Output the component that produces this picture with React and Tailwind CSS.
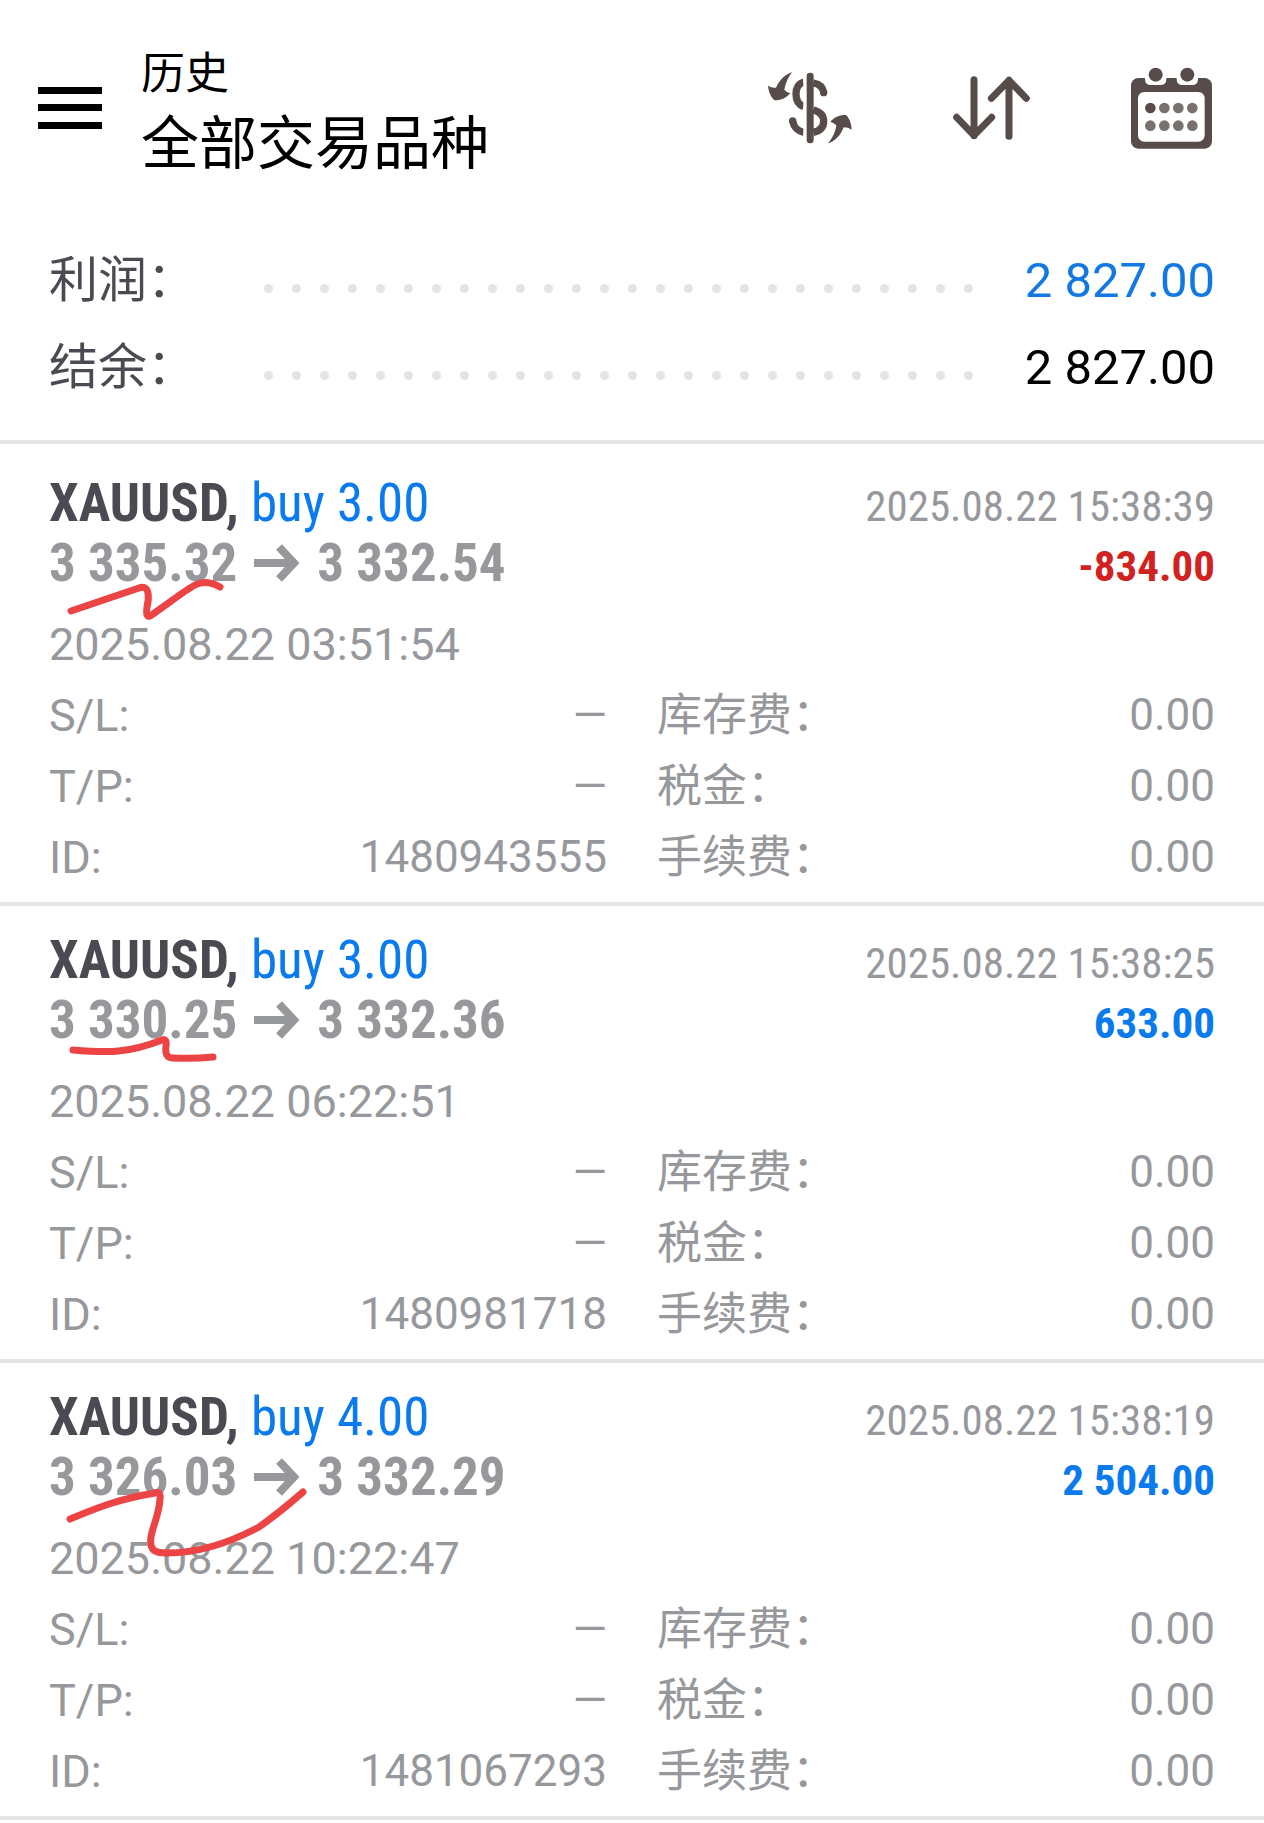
const SUMMARY = [
  { label: '利润：', value: '2 827.00', color: 'text-[#1279e4]' },
  { label: '结余：', value: '2 827.00', color: 'text-black' },
];

const DEALS = [
  {
    id: '1480943555',
    symbol: 'XAUUSD',
    side: 'buy 3.00',
    open: '3 335.32',
    close: '3 332.54',
    openTime: '2025.08.22 03:51:54',
    closeTime: '2025.08.22 15:38:39',
    profit: '-834.00',
    mark: 'M22 50 L90 27 Q97 24 99 32 Q100 38 98 46 Q96 60 104 53 C120 42 135 30 146 24 Q157 18 171 26',
  },
  {
    id: '1480981718',
    symbol: 'XAUUSD',
    side: 'buy 3.00',
    open: '3 330.25',
    close: '3 332.36',
    openTime: '2025.08.22 06:22:51',
    closeTime: '2025.08.22 15:38:25',
    profit: '633.00',
    mark: 'M24 32 C60 35 80 35 113 22 Q118 20 117 28 C116 36 118 40 124 40 Q145 41 164 39',
  },
  {
    id: '1481067293',
    symbol: 'XAUUSD',
    side: 'buy 4.00',
    open: '3 326.03',
    close: '3 332.29',
    openTime: '2025.08.22 10:22:47',
    closeTime: '2025.08.22 15:38:19',
    profit: '2 504.00',
    mark: 'M21 44 C50 32 70 24 106 18 Q112 16 111 24 C110 40 104 50 102 62 C100 76 106 78 118 78 C150 78 180 68 210 52 Q230 38 254 17',
  },
];

const DOTS = Array.from({ length: 26 }, (_, i) => i);

function MenuIcon() {
  return (
    <svg width="64" height="42" viewBox="0 0 64 42" fill="#000" aria-hidden="true">
      <rect x="0" y="0" width="64" height="7" />
      <rect x="0" y="17" width="64" height="7" />
      <rect x="0" y="35" width="64" height="7" />
    </svg>
  );
}

function CurrencyIcon() {
  return (
    <svg width="84" height="72" viewBox="0 0 252 216" fill="none" aria-hidden="true">
      <path
        d="M107 31 C92 34 84 48 84 66 C84 84 92 98 107 104 M136 33 C154 36 165 46 167 62 M136 114 C156 119 167 130 167 148 C167 166 156 177 136 181 M107 181 C90 178 77 165 74 147"
        stroke="#574c49"
        strokeWidth="22"
      />
      <circle cx="167" cy="62" r="11" fill="#574c49" />
      <circle cx="74" cy="147" r="11" fill="#574c49" />
      <rect x="106" y="0" width="10" height="216" fill="#fff" />
      <rect x="116" y="2" width="21" height="212" rx="10" fill="#574c49" />
      <path d="M72 1 C54 5 34 24 24 47 Q10 48 0 41 C2 60 9 76 20 85 C38 86 54 78 67 64 Q56 62 49 53 C52 34 60 16 72 1Z" fill="#574c49" />
      <path d="M180 214 C200 209 218 190 227 166 Q241 166 251 173 C250 154 244 138 234 129 C216 128 198 136 187 149 Q198 152 205 160 C202 182 192 200 180 214Z" fill="#574c49" />
    </svg>
  );
}

function SortIcon() {
  return (
    <svg width="77" height="64" viewBox="0 0 231 192" fill="none" stroke="#574c49" strokeWidth="21" strokeLinecap="round" strokeLinejoin="round" aria-hidden="true">
      <path d="M63 11 V179 M11 124 L63 178 L116 124" />
      <path d="M168 181 V13 M115 67 L168 13 L220 67" />
    </svg>
  );
}

function CalendarIcon() {
  return (
    <svg width="81" height="82" viewBox="0 0 243 246" aria-hidden="true">
      <rect x="0" y="33" width="243" height="212" rx="22" fill="#574c49" />
      <path d="M42 30 H106 V36 Q106 54 88 54 H60 Q42 54 42 36Z M137 30 H201 V36 Q201 54 183 54 H155 Q137 54 137 36Z" fill="#fff" />
      <circle cx="74" cy="23" r="21" fill="#574c49" />
      <circle cx="169" cy="23" r="21" fill="#574c49" />
      <rect x="21" y="75" width="200" height="149" rx="19" fill="#fff" />
      <g fill="#79716d">
        <circle cx="58" cy="123" r="16" fill="#574c49" />
        <circle cx="100" cy="123" r="16" />
        <circle cx="142" cy="123" r="16" />
        <circle cx="184" cy="123" r="16" />
        <circle cx="58" cy="176" r="16" />
        <circle cx="100" cy="176" r="16" />
        <circle cx="142" cy="176" r="16" />
        <circle cx="184" cy="176" r="16" />
      </g>
    </svg>
  );
}

function ArrowIcon() {
  return (
    <svg width="46" height="38" viewBox="0 0 46 38" fill="none" stroke="#97989c" strokeWidth="8" aria-label="to">
      <path d="M0 19 H40 M25 3 L40 19 L25 35" />
    </svg>
  );
}

function Field({ label, value }) {
  return (
    <div className="flex justify-between">
      <dt className="text-[45px]">{label}</dt>
      <dd className="text-[44px]">{value}</dd>
    </div>
  );
}

function Deal({ deal }) {
  const loss = deal.profit.startsWith('-');
  return (
    <article className="border-b-4 border-[#e4e4e4] px-[49px] pt-6 pb-[9px] text-[#97989c]">
      <div className="flex h-[60px] items-baseline justify-between font-['Roboto_Condensed',Roboto,sans-serif] leading-[60px]">
        <h2 className="text-[53px] text-[#0a7aef]">
          <span className="font-bold text-[#4b4a52]">{deal.symbol},</span> {deal.side}
        </h2>
        <time className="text-[43px]">{deal.closeTime}</time>
      </div>
      <div className="relative flex h-[60px] items-baseline justify-between font-['Roboto_Condensed',Roboto,sans-serif] font-bold leading-[60px]">
        <p className="flex items-center gap-[17px] text-[53px]">
          {deal.open}
          <ArrowIcon />
          {deal.close}
        </p>
        <p className={loss ? 'text-[43px] text-[#d12222]' : 'text-[43px] text-[#0a7aef]'}>{deal.profit}</p>
        {/* hand-drawn marker stroke */}
        <svg className="absolute top-7 left-0" width="270" height="90" viewBox="0 0 270 90" fill="none" stroke="#ec4444" strokeWidth="7" strokeLinecap="round" strokeLinejoin="round" aria-hidden="true">
          <path d={deal.mark} />
        </svg>
      </div>
      <div className="pt-4 leading-[71px]">
        <time className="block text-[45px]">{deal.openTime}</time>
        <dl className="grid grid-cols-2 gap-x-[50px]">
          <Field label="S/L:" value="—" />
          <Field label="库存费：" value="0.00" />
          <Field label="T/P:" value="—" />
          <Field label="税金：" value="0.00" />
          <Field label="ID:" value={deal.id} />
          <Field label="手续费：" value="0.00" />
        </dl>
      </div>
    </article>
  );
}

export default function App() {
  return (
    <main className="bg-white font-[Roboto,'Noto_Sans_CJK_SC',sans-serif]">
      <header className="flex items-center pt-8 pr-[52px] pl-[38px]">
        <button type="button" aria-label="菜单">
          <MenuIcon />
        </button>
        <div className="ml-[39px] flex-1 pt-3 text-black">
          <p className="text-[44px] leading-[60px]">历史</p>
          <h1 className="text-[58px] leading-[80px]">全部交易品种</h1>
        </div>
        <div className="flex items-center gap-[101px]">
          <button type="button" aria-label="货币">
            <CurrencyIcon />
          </button>
          <button type="button" aria-label="排序">
            <SortIcon />
          </button>
          <button type="button" aria-label="日历">
            <CalendarIcon />
          </button>
        </div>
      </header>

      <section className="border-b-4 border-[#e4e4e4] px-[49px] pt-[53px] pb-[29px] text-[49px] leading-[87px]">
        {SUMMARY.map((row) => (
          <div key={row.label} className="flex items-center">
            <span className="w-[215px] text-[#4b4a52]">{row.label}</span>
            <span className="mr-[51px] flex flex-1 justify-between pt-4" aria-hidden="true">
              {DOTS.map((dot) => (
                <span key={dot} className="size-[9px] rounded-full bg-[#e4e4e4]" />
              ))}
            </span>
            <span className={row.color}>{row.value}</span>
          </div>
        ))}
      </section>

      <section className="pt-[5px]">
        {DEALS.map((deal) => (
          <Deal key={deal.id} deal={deal} />
        ))}
      </section>
    </main>
  );
}
